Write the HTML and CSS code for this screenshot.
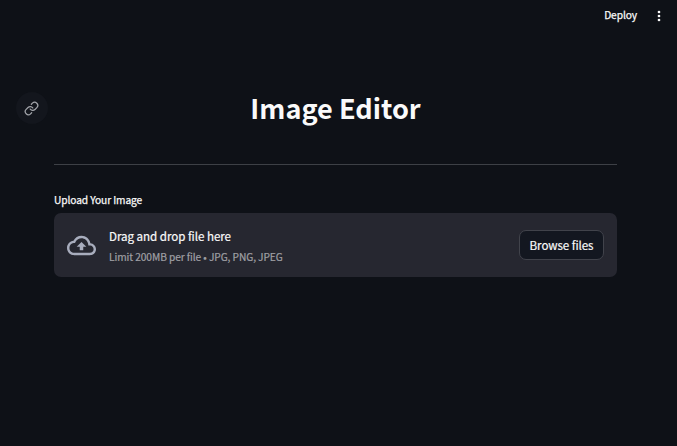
FILE: index.html
```html
<!DOCTYPE html>
<html lang="en">
<head>
<meta charset="utf-8">
<title>Image Editor</title>
<link rel="stylesheet" href="styles.css">
</head>
<body>
<header class="toolbar">
  <span class="deploy">Deploy</span>
  <svg class="menu" viewBox="0 0 4 12"><circle cx="2" cy="2" r="1.35"/><circle cx="2" cy="6" r="1.35"/><circle cx="2" cy="10" r="1.35"/></svg>
</header>
<main class="content">
  <div class="heading">
    <a class="anchor"><svg viewBox="0 0 24 24"><path d="M10 13a5 5 0 0 0 7.54.54l3-3a5 5 0 0 0-7.07-7.07l-1.72 1.71"/><path d="M14 11a5 5 0 0 0-7.54-.54l-3 3a5 5 0 0 0 7.07 7.07l1.71-1.71"/></svg></a>
    <h1 class="title">Image Editor</h1>
  </div>
  <hr class="divider">
  <div class="label">Upload Your Image</div>
  <section class="dropzone">
    <svg class="cloud" viewBox="0 0 24 24"><path d="M19.35 10.04C18.67 6.59 15.64 4 12 4 9.11 4 6.6 5.64 5.35 8.04 2.34 8.36 0 10.91 0 14c0 3.31 2.69 6 6 6h13c2.76 0 5-2.24 5-5 0-2.64-2.05-4.78-4.65-4.96zM19 18H6c-2.21 0-4-1.79-4-4 0-2.05 1.53-3.76 3.56-3.97l1.07-.11.5-.95C8.08 7.14 9.94 6 12 6c2.62 0 4.88 1.86 5.39 4.43l.3 1.5 1.53.11c1.56.1 2.78 1.41 2.78 2.96 0 1.65-1.35 3-3 3zM8 13h2.55v3h2.9v-3H16l-4-4z"/></svg>
    <div class="hint">
      <span class="primary">Drag and drop file here</span>
      <span class="secondary">Limit 200MB per file • JPG, PNG, JPEG</span>
    </div>
    <button class="browse">Browse files</button>
  </section>
</main>
</body>
</html>
```

FILE: styles.css
```css
* { box-sizing: border-box; }
body {
  margin: 0;
  height: 446px;
  overflow: hidden;
  background: #0e1117;
  color: #fafafa;
  font-family: "Noto Sans CJK JP", "Noto Sans", sans-serif;
}
.toolbar {
  height: 32px;
  padding-right: 16px;
  display: flex;
  align-items: center;
  justify-content: flex-end;
  gap: 20px;
}
.deploy {
  margin-top: -2px;
  font-size: 10.2px;
  line-height: 16px;
  letter-spacing: -0.08px;
  -webkit-text-stroke: 0.25px currentColor;
}
.menu { width: 4px; height: 12px; fill: #fafafa; }
.content { width: 563px; margin-left: 54px; }
.heading {
  position: relative;
  margin-top: 55px;
  height: 44px;
}
.anchor {
  position: absolute;
  left: -38px;
  top: 5px;
  width: 32px;
  height: 32px;
  padding-right: 2px;
  border-radius: 50%;
  background: #13161d;
  display: flex;
  align-items: center;
  justify-content: center;
}
.anchor svg {
  width: 15px;
  height: 15px;
  fill: none;
  stroke: #a3a5ab;
  stroke-width: 2;
  stroke-linecap: round;
  stroke-linejoin: round;
}
.title {
  margin: 0;
  text-align: center;
  font-size: 27.1px;
  line-height: 42px;
  font-weight: 700;
}
.divider {
  margin: 33px 0 27px;
  border: 0;
  height: 1px;
  background: #3d4046;
}
.label {
  margin-bottom: 5px;
  font-size: 10.2px;
  line-height: 16px;
  letter-spacing: -0.1px;
  -webkit-text-stroke: 0.25px currentColor;
}
.dropzone {
  height: 64px;
  padding: 0 13px;
  border-radius: 7px;
  background: #262730;
  display: flex;
  align-items: center;
}
.cloud { width: 29px; height: 29px; margin-right: 13px; fill: #a8adbd; }
.hint { display: flex; flex-direction: column; gap: 3px; flex: 1; }
.primary {
  font-size: 11.6px;
  line-height: 20px;
  letter-spacing: -0.05px;
  -webkit-text-stroke: 0.2px currentColor;
}
.secondary {
  font-size: 10.2px;
  line-height: 16px;
  letter-spacing: -0.08px;
  color: #a0a0a5;
  -webkit-text-stroke: 0.2px currentColor;
}
.browse {
  width: 85px;
  height: 30px;
  padding: 0;
  border: 1px solid #41434b;
  border-radius: 7px;
  background: #131720;
  color: #fafafa;
  font-family: inherit;
  font-size: 11.6px;
  line-height: 20px;
  letter-spacing: -0.08px;
  -webkit-text-stroke: 0.2px currentColor;
}
```
